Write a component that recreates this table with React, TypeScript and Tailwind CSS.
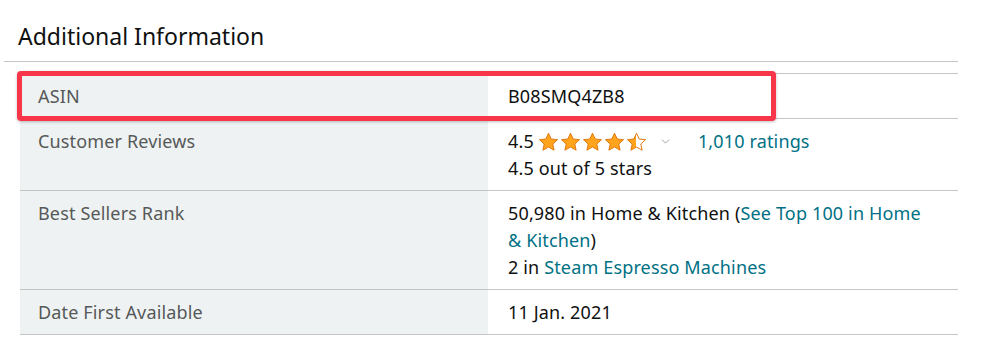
import { ChevronDown } from 'lucide-react';

interface Row {
  label: string;
  value: React.ReactNode;
}

const STAR = 'M10.5 1.2l2.7 5.8 6.3.7-4.7 4.3 1.3 6.2-5.6-3.2-5.6 3.2 1.3-6.2L1.5 7.7l6.3-.7z';

function Star({ half }: { half?: boolean }) {
  return (
    <svg width="21" height="19" viewBox="0 0 21 19" className="block">
      <defs>
        <linearGradient id="half">
          <stop offset="50%" stopColor="#ffa41c" />
          <stop offset="50%" stopColor="#ffffff" />
        </linearGradient>
      </defs>
      <path
        d={STAR}
        fill={half ? 'url(#half)' : '#ffa41c'}
        stroke="#e47911"
        strokeWidth="1"
        strokeLinejoin="round"
      />
    </svg>
  );
}

function Rating() {
  return (
    <div>
      <div className="flex items-center">
        <span>4.5</span>
        <span className="flex ml-[4px] gap-[1px]">
          <Star />
          <Star />
          <Star />
          <Star />
          <Star half />
        </span>
        <ChevronDown size={13} strokeWidth={1.5} className="ml-[12px] text-[#8a8f8f]" />
        <a className="ml-[26px] text-[#007185]">1,010 ratings</a>
      </div>
      <div>4.5 out of 5 stars</div>
    </div>
  );
}

const rows: Row[] = [
  { label: 'ASIN', value: 'B08SMQ4ZB8' },
  { label: 'Customer Reviews', value: <Rating /> },
  {
    label: 'Best Sellers Rank',
    value: (
      <div>
        <div>
          50,980 in Home &amp; Kitchen (<a className="text-[#007185]">See Top 100 in Home</a>
        </div>
        <div>
          <a className="text-[#007185]">&amp; Kitchen</a>)
        </div>
        <div>
          2 in <a className="text-[#007185]">Steam Espresso Machines</a>
        </div>
      </div>
    ),
  },
  { label: 'Date First Available', value: '11 Jan. 2021' },
];

export default function App() {
  return (
    <div className="bg-white w-[1004px] h-[344px] pt-[20px] pl-[4px]" style={{ fontFamily: '"Noto Sans", Arial, sans-serif' }}>
      <div className="w-[954px]">
        <h2 className="text-[23px] leading-[32px] text-[#0f1111] pl-[14px] pb-[9px]">Additional Information</h2>
        <div className="border-t border-[#c4c6c6]" />
        <div className="relative mt-[11px] ml-[16px] border-t border-[#c4c6c6] text-[18px] leading-[27px] tracking-[0.15px]">
          {rows.map((row) => (
            <div key={row.label} className="flex border-b border-[#c4c6c6]">
              <div className="w-[468px] shrink-0 bg-[#eff2f2] text-[#565959] px-[18px] py-[8.5px]">{row.label}</div>
              <div className="flex-1 text-[#0f1111] px-[20px] py-[8.5px]">{row.value}</div>
            </div>
          ))}
          <div className="absolute left-[-3px] top-[-3px] w-[759px] h-[50px] border-[5px] border-[#f73649] rounded-[4px] shadow-[0_1px_3px_rgba(0,0,0,0.25)]" />
        </div>
      </div>
    </div>
  );
}
